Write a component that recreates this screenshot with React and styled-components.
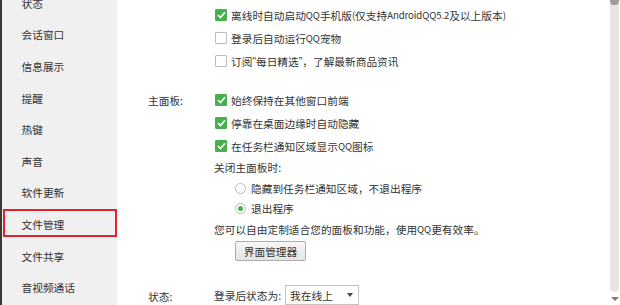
import React from "react";
import styled, { createGlobalStyle } from "styled-components";

const GlobalStyle = createGlobalStyle`
  html, body {
    margin: 0;
    padding: 0;
    background: #ffffff;
    overflow: hidden;
  }
  body {
    font-family: "Noto Sans CJK SC", "Noto Sans", sans-serif;
    font-size: 10.7px;
    color: #333333;
  }
`;

const Window = styled.div`
  display: flex;
  width: 620px;
  height: 305px;
  overflow: hidden;
`;

// left navigation
const Sidebar = styled.nav`
  width: 115px;
  flex-shrink: 0;
  background: #f0f0f0;
  border-left: 2px solid #383838;
  overflow: hidden;
`;

const NavList = styled.ul`
  list-style: none;
  margin: -12.5px 0 0;
  padding: 0;
`;

const NavItem = styled.li`
  position: relative;
  height: 31.6px;
  display: flex;
  align-items: center;
  padding-left: 19.5px;
  color: #333333;

  ${(p) =>
    p.$marked &&
    `
    &::before {
      content: "";
      position: absolute;
      top: 0;
      left: 1px;
      right: 0;
      height: 28px;
      border: 2px solid #e2222b;
      box-sizing: border-box;
    }
  `}
`;

// right settings panel
const Main = styled.main`
  flex: 1;
  display: flex;
  background: #ffffff;
`;

const Content = styled.div`
  flex: 1;
  padding: 3.5px 0 0 31px;
`;

const Group = styled.section`
  display: grid;
  grid-template-columns: 66px 1fr;
  margin-top: ${(p) => p.$gap || 0}px;
`;

const Label = styled.div`
  height: 23px;
  display: flex;
  align-items: center;
`;

const Options = styled.div`
  display: flex;
  flex-direction: column;
`;

const Row = styled.div`
  height: ${(p) => p.$h || 23}px;
  display: flex;
  align-items: center;
  padding-left: ${(p) => p.$indent || 0}px;
  white-space: nowrap;
`;

// latin runs are narrower in the original UI font
const Latin = styled.span`
  font-size: 9.6px;
  letter-spacing: -0.1px;
`;

const Quote = styled.span`
  font-family: "Liberation Sans", sans-serif;
`;

const Box = styled.span`
  width: 12px;
  height: 12px;
  margin: 0 4px 0 1px;
  box-sizing: border-box;
  border-radius: 1px;
  display: inline-flex;
  align-items: center;
  justify-content: center;
  flex-shrink: 0;
  background: ${(p) => (p.$on ? "#46b04a" : "#ffffff")};
  border: 1px solid ${(p) => (p.$on ? "#46b04a" : "#bcbcbc")};
`;

const Radio = styled.span`
  width: 11px;
  height: 11px;
  margin-right: 5px;
  box-sizing: border-box;
  border-radius: 50%;
  border: 1px solid #b8b8b8;
  background: #ffffff;
  display: inline-flex;
  align-items: center;
  justify-content: center;
  flex-shrink: 0;

  &::after {
    content: "";
    width: 5px;
    height: 5px;
    border-radius: 50%;
    background: ${(p) => (p.$on ? "#4cb050" : "transparent")};
  }
`;

const Button = styled.button`
  margin: 1.5px 0 0 21px;
  width: 71px;
  height: 20px;
  padding: 0;
  font: inherit;
  color: #333333;
  border: 1px solid #acacac;
  border-radius: 2px;
  background: linear-gradient(#f7f7f7, #e4e4e4);
`;

const Select = styled.div`
  margin-left: 4px;
  width: 74px;
  height: 20px;
  box-sizing: border-box;
  border: 1px solid #c4c4c4;
  display: flex;
  align-items: center;
  justify-content: space-between;
  padding: 0 5px 0 4px;
  background: #ffffff;

  &::after {
    content: "";
    border-left: 3.5px solid transparent;
    border-right: 3.5px solid transparent;
    border-top: 4px solid #4a4a4a;
  }
`;

// scrollbar
const ScrollColumn = styled.div`
  width: 9px;
  margin-right: 1px;
  display: flex;
  flex-direction: column;
`;

const Track = styled.div`
  flex: 1;
  background: #e6e6e6;
  border-radius: 0 0 4px 4px;
  overflow: hidden;
`;

const Thumb = styled.div`
  height: 5px;
  background: #9d9d9d;
  border-radius: 0 0 4px 4px;
`;

const ArrowDown = styled.div`
  height: 13px;
  display: flex;
  align-items: center;
  justify-content: center;

  &::after {
    content: "";
    border-left: 4px solid transparent;
    border-right: 4px solid transparent;
    border-top: 4px solid #7a7a7a;
  }
`;

const navItems = [
  "状态",
  "会话窗口",
  "信息展示",
  "提醒",
  "热键",
  "声音",
  "软件更新",
  "文件管理",
  "文件共享",
  "音视频通话",
];

function Check({ on, children }) {
  return (
    <Row>
      <Box $on={on}>
        {on && (
          <svg width="9" height="8" viewBox="0 0 9 8">
            <path
              d="M1 4.2 L3.5 6.5 L8 1.3"
              fill="none"
              stroke="#ffffff"
              strokeWidth="1.7"
            />
          </svg>
        )}
      </Box>
      {children}
    </Row>
  );
}

function Choice({ on, children }) {
  return (
    <Row $h={20.5} $indent={21}>
      <Radio $on={on} />
      {children}
    </Row>
  );
}

export default function App() {
  return (
    <Window>
      <GlobalStyle />
      <Sidebar>
        <NavList>
          {navItems.map((item) => (
            <NavItem key={item} $marked={item === "文件管理"}>
              {item}
            </NavItem>
          ))}
        </NavList>
      </Sidebar>

      <Main>
        <Content>
          <Group>
            <Label />
            <Options>
              <Check on>
                离线时自动启动<Latin>QQ</Latin>手机版<Latin>(</Latin>仅支持
                <Latin>AndroidQQ5.2</Latin>及以上版本<Latin>)</Latin>
              </Check>
              <Check>
                登录后自动运行<Latin>QQ</Latin>宠物
              </Check>
              <Check>
                订阅<Quote>“</Quote>每日精选<Quote>”</Quote>，了解最新商品资讯
              </Check>
            </Options>
          </Group>

          <Group $gap={16}>
            <Label>主面板:</Label>
            <Options>
              <Check on>始终保持在其他窗口前端</Check>
              <Check on>停靠在桌面边缘时自动隐藏</Check>
              <Check on>
                在任务栏通知区域显示<Latin>QQ</Latin>图标
              </Check>
              <Row $h={20.5}>关闭主面板时:</Row>
              <Choice>隐藏到任务栏通知区域，不退出程序</Choice>
              <Choice on>退出程序</Choice>
              <Row $h={20.5}>
                您可以自由定制适合您的面板和功能，使用<Latin>QQ</Latin>更有效率。
              </Row>
              <div>
                <Button>界面管理器</Button>
              </div>
            </Options>
          </Group>

          <Group $gap={24}>
            <Label>状态:</Label>
            <Options>
              <Row $h={20}>
                登录后状态为:
                <Select>我在线上</Select>
              </Row>
            </Options>
          </Group>
        </Content>

        <ScrollColumn>
          <Track>
            <Thumb />
          </Track>
          <ArrowDown />
        </ScrollColumn>
      </Main>
    </Window>
  );
}
